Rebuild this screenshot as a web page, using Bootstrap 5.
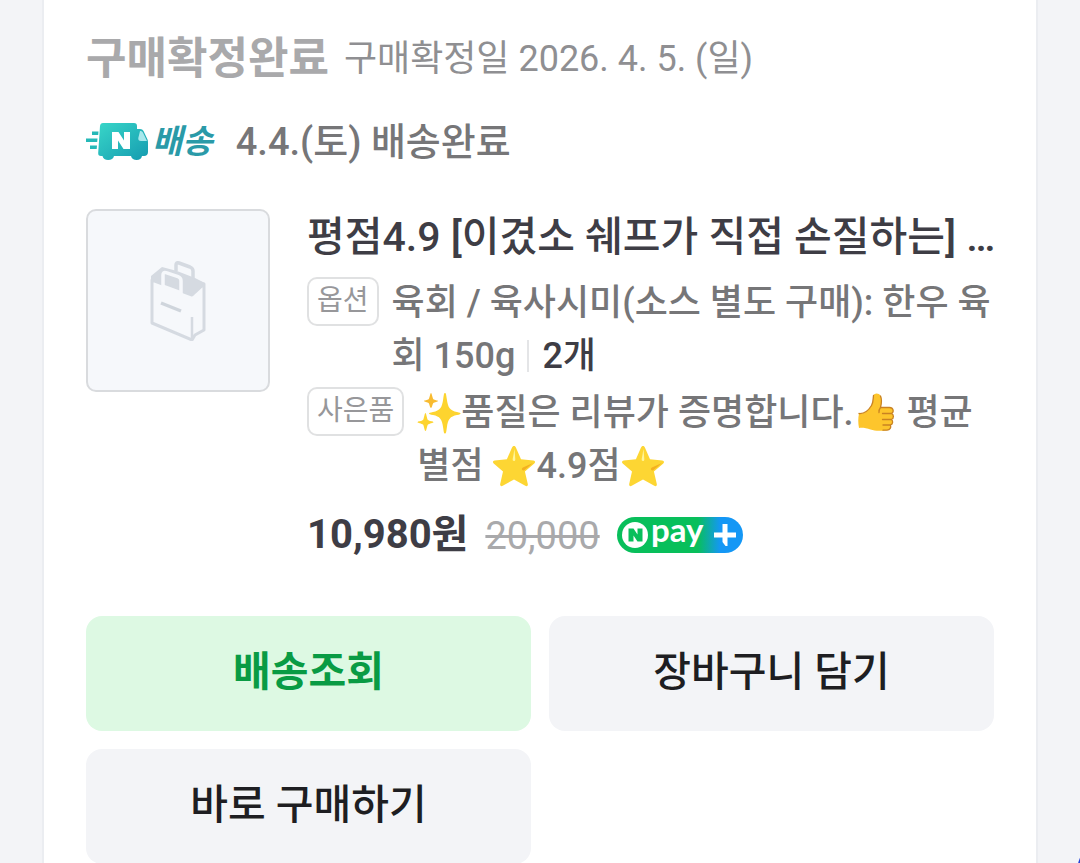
<!DOCTYPE html>
<html lang="ko">
<head>
<meta charset="utf-8">
<meta name="viewport" content="width=device-width, initial-scale=1">
<title>주문 상세</title>
<link href="https://cdn.jsdelivr.net/npm/bootstrap@5.3.0/dist/css/bootstrap.min.css" rel="stylesheet">
<style>
  body { font-family: Roboto, "Noto Sans CJK KR", sans-serif; background: #f3f4f7; color: #3e3d45; }
  .order-panel { margin: 0 42px; padding: 31px 42px 0; border: solid #ebedf1; border-width: 0 2px; min-height: 100vh; }
  .order-state { font-size: 44px; line-height: 56px; font-weight: 700; color: #a9a9ab; margin-right: 15px; }
  .order-date { font-size: 36px; line-height: 56px; color: #8f8f92; }
  .ship-row { font-size: 38px; line-height: 52px; font-weight: 500; color: #767678; margin-top: 29px; }
  .ship-label { font-size: 33px; font-weight: 700; font-style: italic; color: #2a9aa8; margin-left: 2px; margin-right: 23px; }
  .product-row { gap: 37px; margin-top: 41px; }
  .thumb-box { width: 184px; height: 183px; background: #f6f8fb; border: 2px solid #d9dbde; border-radius: 10px; }
  .product-name { font-size: 41px; line-height: 56px; font-weight: 500; }
  .detail-list { margin-top: 12px; row-gap: 4px; }
  .detail-line { font-size: 36px; line-height: 53px; font-weight: 500; color: #767678; gap: 13px; }
  .tag-box { font-size: 28px; line-height: 43px; font-weight: 400; color: #97979a; border: 2px solid #e0e1e2; border-radius: 10px; padding: 0 8px 2px; }
  .qty { color: #3e3d45; border-left: 2px solid #e4e5e7; padding-left: 13px; margin-left: 12px; line-height: 32px; display: inline-block; }
  .emoji { width: 44px; height: 42px; vertical-align: -9px; }
  .price-row { gap: 17px; margin-top: 15px; line-height: 52px; }
  .price-now { font-size: 40px; font-weight: 700; }
  .price-was { font-size: 38px; color: #a9a9ab; padding-top: 2px; }
  .action-grid { display: grid; grid-template-columns: 1fr 1fr; gap: 18px; margin-top: 54px; }
  .btn-action { --bs-btn-font-size: 41px; --bs-btn-font-weight: 500; --bs-btn-line-height: 60px; --bs-btn-bg: #f3f4f7; --bs-btn-color: #1e1e22; --bs-btn-hover-bg: #e8eaee; --bs-btn-border-width: 0; --bs-btn-border-radius: 16px; height: 115px; padding-bottom: 10px; }
  .btn-track { --bs-btn-bg: #ddf9e3; --bs-btn-color: #099b44; --bs-btn-hover-bg: #cdf3d6; --bs-btn-hover-color: #099b44; --bs-btn-font-weight: 700; }
  .float-action { right: -116px; bottom: -76px; width: 120px; height: 120px; background: #2340d8; }
</style>
</head>
<body>
<svg class="position-absolute" width="0" height="0" aria-hidden="true">
  <defs>
    <symbol id="star" viewBox="0 0 44 42">
      <path fill="#fdd633" d="M22 1c1 0 1.500.6 2 1.700l5 11.600 12.300 1.100c1.900.2 2.300 1.900 1 3l-9.400 8 2.900 12.600c.4 1.900-1 2.700-2.500 1.800L22 34.500l-11.300 6.300c-1.600.9-2.900-.1-2.500-1.800L11 26.400l-9.300-8c-1.300-1.200-.8-2.800 1-3l12.200-1.100 5-11.600C20.500 1.600 21 1 22 1z"/>
      <path fill="#fff59a" d="M22.500 4l.8 10c.1 1.500-.5 2-1.400 2s-1.400-.8-1.200-2z"/>
      <path fill="#f4b01f" d="M41 18l-8.500 7c-.8.700-2 .4-2.400-.3-.5-.8-.1-1.700.8-2.200z"/>
    </symbol>
    <symbol id="sparkles" viewBox="0 0 44 42">
      <g fill="#fdd42f"><path d="M28 1c1 0 1.200 1.600 1.800 6C31 16 33 18.500 40 20c2.800.6 3.500.8 3.500 1.500s-.7 1-3.500 1.600C33 24.600 31 27 29.800 36c-.6 4.400-.8 5.500-1.800 5.500s-1.200-1.100-1.800-5.500C25 27 23 24.600 16 23.100c-2.800-.6-4-.9-4-1.600s1.200-.9 4-1.500c7-1.500 9-4 10.200-13 .6-4.400.8-6 1.800-6z"/>
      <path fill="#f8bb30" d="M14 1c.8 0 1.500 5.200 2.400 6.200 1 1 4.600 1 4.600 1.800s-3.600 1-4.600 2S15 16 14 16s-1.500-4-2.400-5S7 9.800 7 9s3.600-.8 4.600-1.800S13.200 1 14 1z"/>
      <path d="M8.500 21c.8 0 1.500 6 2.500 7s5.500 1.300 5.500 2.200-4.500 1.300-5.500 2.300-1.500 6.500-2.500 6.500S7 33.500 6 32.500.5 31.100.5 30.200 5 29 6 28s1.500-7 2.500-7z"/></g>
    </symbol>
    <symbol id="thumbsup" viewBox="0 0 44 42">
      <path fill="#fdc52c" d="M5 21.500c6 .5 9.500-3 12.500-8C19.500 10 19 7 19.500 3.500 20 1 25 .5 26.500 4c1.700 4 .8 8.500 0 11.500h9c4 0 4.800 4.500 2 6 2.500 1 2.500 5 0 6 1.800 1.500 1.500 5-1.200 5.500 1.200 2.500-.3 5-3.300 5.200-7 .8-12 .8-16.500-.7-4-1.300-8-2-11.500-1.500C4 31 4 26 5 21.500z"/>
      <path fill="none" stroke="#c98222" stroke-width="1.300" stroke-linecap="round" d="M5 21.500c6 .5 9.500-3 12.500-8C19.500 10 19 7 19.500 3.500M26.500 4c1.700 4 .8 8.500 0 11.500h9c4 0 4.800 4.500 2 6h-9m9 0c2.500 1 2.500 5 0 6h-9m9 0c1.800 1.500 1.500 5-1.200 5.500H29m7.300 0c1.200 2.500-.3 5-3.300 5.200h-4M26.500 15.500c-1.500 2-2 3-1.500 5"/>
    </symbol>
  </defs>
</svg>

<main class="order-panel bg-white">
  <header class="d-flex align-items-center">
    <h1 class="order-state mb-0">구매확정완료</h1>
    <span class="order-date">구매확정일 2026. 4. 5. (일)</span>
  </header>

  <div class="ship-row d-flex align-items-center">
    <svg width="64" height="40" viewBox="0 0 64 40" role="img" aria-label="N">
      <defs><linearGradient id="truckFill" x1="0" y1="0" x2="1" y2="1"><stop offset="0" stop-color="#38d6c8"/><stop offset="1" stop-color="#159bb0"/></linearGradient></defs>
      <path fill="url(#truckFill)" d="M17 1h31c2 0 3 1 3 3v3h3c1.700 0 2.800.7 3.500 2l4 8.500c.4 1 .5 1.700.5 3V30c0 2.500-1.500 4-4 4h-2c-.5 2.500-2.500 4-5.300 4S45.500 36.500 45 34H28c-.5 2.500-2.800 4-5.800 4S17 36.500 16.500 34H15c-2 0-3-1.300-2.800-3L14 4c.3-2 1.200-3 3-3z"/>
      <path fill="#a8e8ec" d="M54 9c1.500 0 2.500.5 3 1.800l4 8.200h-6c-2 0-3-1-2.700-3z"/>
      <path fill="#fff" d="M26 10h6.500l5.500 8.500V10h6v17h-6.500L32 18.500V27h-6z"/>
      <path fill="#25b9b8" d="M6 9.500h6.500l-.3 3.500H6zM0 16.500h11.500l-.3 3.500H0zM4 23.500h7l-.3 3.500H4z"/>
    </svg>
    <span class="ship-label">배송</span>
    <span>4.4.(토) 배송완료</span>
  </div>

  <section class="product-row d-flex align-items-start">
    <div class="thumb-box flex-shrink-0 d-flex align-items-center justify-content-center">
      <svg width="56" height="80" viewBox="0 0 56 80" aria-hidden="true">
        <path fill="#d5dae1" d="M1 15l11-9 15 4 18 7 10 5-12 12-18-8L1 20z"/>
        <path fill="none" stroke="#d5dae1" stroke-width="3.500" stroke-linejoin="round" d="M26 10V4c0-2 1-2.700 3-2l11 4c2 .8 3 2 3 4v9"/>
        <path fill="#f6f8fb" stroke="#d5dae1" stroke-width="3" stroke-linejoin="round" d="M2 19l40 15 12-11v46l-9 5-3 5L2 62z"/>
        <path fill="#d5dae1" d="M30 12l24 10-12 11-12-5z"/>
        <path fill="#d5dae1" stroke="#f6f8fb" stroke-width="3.500" d="M13 28V14c0-2 1-3 3-2.300l12 4c2 .7 3 1.800 3 4V34"/>
        <path fill="#f6f8fb" d="M12 23l19 7v8l-19-7z"/>
        <path fill="none" stroke="#d5dae1" stroke-width="2.500" d="M42 56v22"/>
        <path fill="none" stroke="#cfd5dc" stroke-width="3.500" d="M11 42l20 8"/>
      </svg>
    </div>
    <div class="flex-grow-1">
      <h2 class="product-name mb-0 text-nowrap">평점4.9 [이겼소 쉐프가 직접 손질하는] …</h2>
      <div class="detail-list d-flex flex-column">
        <div class="detail-line d-flex align-items-start">
          <span class="tag-box text-nowrap">옵션</span>
          <span>육회 / 육사시미(소스 별도 구매): 한우 육회 150g<span class="qty">2개</span></span>
        </div>
        <div class="detail-line d-flex align-items-start">
          <span class="tag-box text-nowrap">사은품</span>
          <span><svg class="emoji" role="img" aria-label="반짝임"><use href="#sparkles"/></svg>품질은 리뷰가 증명합니다.<svg class="emoji" role="img" aria-label="최고"><use href="#thumbsup"/></svg> 평균 별점 <svg class="emoji" role="img" aria-label="별"><use href="#star"/></svg>4.9점<svg class="emoji" role="img" aria-label="별"><use href="#star"/></svg></span>
        </div>
      </div>
      <div class="price-row d-flex align-items-center">
        <strong class="price-now">10,980원</strong>
        <del class="price-was">20,000</del>
        <svg class="overflow-visible" width="126" height="36" viewBox="0 0 126 36" role="img" aria-label="N pay plus">
          <defs><linearGradient id="payFill"><stop offset=".64" stop-color="#08bf5b"/><stop offset=".82" stop-color="#1497f5"/></linearGradient></defs>
          <rect width="126" height="36" rx="18" fill="url(#payFill)"/>
          <circle cx="18" cy="18" r="13" fill="#fff"/>
          <path fill="#08bf5b" d="M11.500 11.500h5l4 6v-6h5v13h-5l-4-6v6h-5z"/>
          <text x="34" y="25" font-family="Lato, sans-serif" font-weight="700" font-size="33" fill="#fff">pay</text>
          <path fill="#fff" d="M105.500 7h5v8.500h8.500v5h-8.500V29h-2l-3-4v-4.500H97v-5h8.500z"/>
        </svg>
      </div>
    </div>
  </section>

  <div class="action-grid">
    <button type="button" class="btn btn-action btn-track">배송조회</button>
    <button type="button" class="btn btn-action">장바구니 담기</button>
    <button type="button" class="btn btn-action">바로 구매하기</button>
  </div>
</main>
<div class="float-action position-fixed rounded-circle"></div>
<script src="https://cdn.jsdelivr.net/npm/bootstrap@5.3.0/dist/js/bootstrap.bundle.min.js"></script>
</body>
</html>
